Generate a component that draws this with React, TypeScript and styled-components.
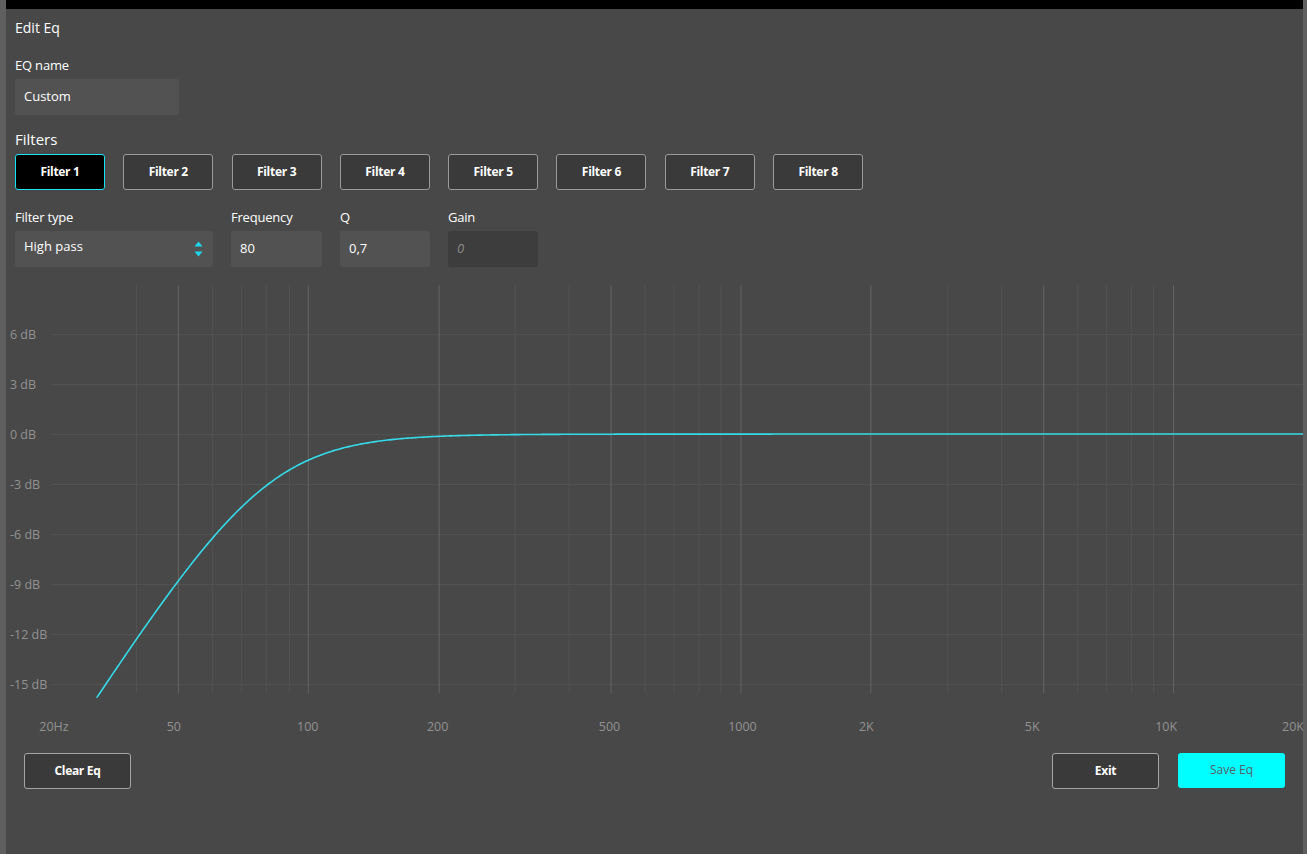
import React, { useMemo } from 'react';
import styled, { createGlobalStyle } from 'styled-components';

const GlobalStyle = createGlobalStyle`
  html, body, #root {
    height: 100%;
    margin: 0;
  }
  body {
    background: #484848;
    font-family: 'Open Sans', 'Liberation Sans', sans-serif;
    color: #fff;
    overflow: hidden;
  }
`;

const CHART_W = 1298;
const CHART_H = 460;
const PX_PER_DECADE = CHART_W / 3;
const ZERO_Y = 150;
const PX_PER_DB = 50 / 3;

const fx = (f: number) => PX_PER_DECADE * Math.log10(f / 20);
const dy = (db: number) => ZERO_Y - db * PX_PER_DB;

const majorLines = [50, 100, 200, 500, 1000, 2000, 5000, 10000];
const minorLines = [40, 60, 70, 80, 90, 300, 400, 600, 700, 800, 900, 3000, 4000, 6000, 7000, 8000, 9000];
const dbLines = [6, 3, 0, -3, -6, -9, -12, -15];
const freqLabels = [
  { text: '20Hz', x: 48 },
  { text: '50', x: 168 },
  { text: '100', x: 302 },
  { text: '200', x: 432 },
  { text: '500', x: 604 },
  { text: '1000', x: 737 },
  { text: '2K', x: 861 },
  { text: '5K', x: 1027 },
  { text: '10K', x: 1161 },
  { text: '20K', x: 1288 },
];

// 2nd order high pass magnitude in dB
const highPassDb = (f: number, f0: number, q: number) => {
  const r = f / f0;
  const r2 = r * r;
  const mag = r2 / Math.sqrt((1 - r2) * (1 - r2) + (r / q) * (r / q));
  return 20 * Math.log10(mag);
};

const EqChart: React.FC<{ freq: number; q: number }> = ({ freq, q }) => {
  const path = useMemo(() => {
    const pts: string[] = [];
    for (let x = 0; x <= CHART_W; x += 2) {
      const f = 20 * Math.pow(10, x / PX_PER_DECADE);
      pts.push(`${x},${dy(highPassDb(f, freq, q)).toFixed(2)}`);
    }
    return 'M' + pts.join(' L');
  }, [freq, q]);

  return (
    <ChartSvg width={CHART_W} height={CHART_H} viewBox={`0 0 ${CHART_W} ${CHART_H}`}>
      <defs>
        <clipPath id="plot">
          <rect x={0} y={0} width={CHART_W} height={414} />
        </clipPath>
      </defs>
      {dbLines.map(db => (
        <line key={db} x1={45} x2={CHART_W} y1={dy(db) + 0.5} y2={dy(db) + 0.5} stroke="#535353" strokeWidth={1} />
      ))}
      {minorLines.map(f => (
        <line key={f} x1={Math.round(fx(f)) + 0.5} x2={Math.round(fx(f)) + 0.5} y1={1} y2={409} stroke="#525252" />
      ))}
      {majorLines.map(f => (
        <line key={f} x1={Math.round(fx(f)) + 0.5} x2={Math.round(fx(f)) + 0.5} y1={1} y2={409} stroke="#646464" />
      ))}
      {dbLines.map(db => (
        <AxisText key={db} x={4} y={dy(db) + 5}>
          {db} dB
        </AxisText>
      ))}
      {freqLabels.map(l => (
        <AxisText key={l.text} x={l.x} y={447} textAnchor="middle">
          {l.text}
        </AxisText>
      ))}
      <path d={path} fill="none" stroke="#35dbe9" strokeWidth={1.6} clipPath="url(#plot)" />
    </ChartSvg>
  );
};

const filters = ['Filter 1', 'Filter 2', 'Filter 3', 'Filter 4', 'Filter 5', 'Filter 6', 'Filter 7', 'Filter 8'];

const App: React.FC = () => {
  return (
    <>
      <GlobalStyle />
      <Frame>
        <SideStrip width={6} />
        <Main>
          <TopBar />
          <Content>
            <Title>Edit Eq</Title>

            <Label>EQ name</Label>
            <Input width={164}>Custom</Input>

            <SectionTitle>Filters</SectionTitle>
            <FilterRow>
              {filters.map((f, i) => (
                <FilterButton key={f} isActive={i === 0}>
                  {f}
                </FilterButton>
              ))}
            </FilterRow>

            <ParamsRow>
              <Field width={198}>
                <Label>Filter type</Label>
                <Select>
                  <span>High pass</span>
                  <Arrows>
                    <svg width="9" height="16" viewBox="0 0 9 16">
                      <path d="M4.5 0.5 L8.5 5.5 L0.5 5.5 Z" fill="#1fd6f0" />
                      <path d="M4.5 15.5 L8.5 10.5 L0.5 10.5 Z" fill="#1fd6f0" />
                    </svg>
                  </Arrows>
                </Select>
              </Field>
              <Field width={91}>
                <Label>Frequency</Label>
                <Input>80</Input>
              </Field>
              <Field width={90}>
                <Label>Q</Label>
                <Input>0,7</Input>
              </Field>
              <Field width={90}>
                <Label>Gain</Label>
                <Input disabled>
                  <Placeholder>0</Placeholder>
                </Input>
              </Field>
            </ParamsRow>
          </Content>

          <ChartArea>
            <EqChart freq={80} q={0.7} />
          </ChartArea>

          <Footer>
            <ActionButton>Clear Eq</ActionButton>
            <FooterRight>
              <ActionButton>Exit</ActionButton>
              <PrimaryButton>Save Eq</PrimaryButton>
            </FooterRight>
          </Footer>
        </Main>
        <SideStrip width={4} />
      </Frame>
    </>
  );
};

const Frame = styled.div`
  display: flex;
  height: 100%;
  width: 100%;
  background: #484848;
`;

const SideStrip = styled.div<{ width: number }>`
  flex: 0 0 ${({ width }) => width}px;
  height: 100%;
  background: #5f5f5f;
`;

const Main = styled.div`
  flex: 1;
  display: flex;
  flex-direction: column;
  min-width: 0;
`;

const TopBar = styled.div`
  height: 9px;
  background: #000;
`;

const Content = styled.div`
  padding: 0 9px;
  display: flex;
  flex-direction: column;
  align-items: flex-start;
`;

const Title = styled.div`
  margin-top: 9px;
  font-size: 14px;
  line-height: 20px;
  font-weight: 500;
`;

const Label = styled.div`
  margin-top: 18px;
  margin-bottom: 5px;
  font-size: 13px;
  line-height: 18px;
  font-weight: 500;
  letter-spacing: -0.2px;
`;

const Input = styled.div<{ width?: number; disabled?: boolean }>`
  box-sizing: border-box;
  width: ${({ width }) => (width ? `${width}px` : '100%')};
  height: 36px;
  padding: 0 9px 2px;
  display: flex;
  align-items: center;
  border-radius: 3px;
  background: ${({ disabled }) => (disabled ? '#3d3d3d' : '#525252')};
  font-size: 13px;
  color: #fff;
`;

const Placeholder = styled.span`
  font-style: italic;
  color: #8a8a8a;
`;

const SectionTitle = styled.div`
  margin-top: 14px;
  margin-bottom: 5px;
  font-size: 15px;
  line-height: 20px;
  font-weight: 500;
`;

const FilterRow = styled.div`
  display: flex;
  gap: 18.3px;
`;

const FilterButton = styled.button<{ isActive: boolean }>`
  box-sizing: border-box;
  width: 90px;
  height: 36px;
  border-radius: 3px;
  border: 1px solid ${({ isActive }) => (isActive ? '#14e4f4' : '#9a9a9a')};
  background: ${({ isActive }) => (isActive ? '#000' : '#3a3a3a')};
  color: #fff;
  font-family: 'Open Sans', 'Liberation Sans', sans-serif;
  font-size: 12px;
  font-weight: 700;
  letter-spacing: -0.3px;
  padding: 0 0 2px;
`;

const ParamsRow = styled.div`
  display: flex;
  gap: 18px;
`;

const Field = styled.div<{ width: number }>`
  width: ${({ width }) => width}px;
  display: flex;
  flex-direction: column;
`;

const Select = styled.div`
  box-sizing: border-box;
  width: 100%;
  height: 36px;
  padding: 0 10px 7px 9px;
  display: flex;
  align-items: center;
  justify-content: space-between;
  border-radius: 3px;
  background: #525252;
  font-size: 13px;
`;

const Arrows = styled.span`
  display: flex;
  margin-top: 7px;
`;

const ChartArea = styled.div`
  margin-top: 17px;
  display: flex;
`;

const ChartSvg = styled.svg`
  display: block;
`;

const AxisText = styled.text`
  font-family: 'Open Sans', 'Liberation Sans', sans-serif;
  font-size: 12.5px;
  fill: #929292;
`;

const Footer = styled.div`
  margin-top: 9px;
  padding: 0 18px;
  display: flex;
  justify-content: space-between;
  align-items: flex-start;
`;

const FooterRight = styled.div`
  display: flex;
  gap: 19px;
`;

const ActionButton = styled.button`
  box-sizing: border-box;
  width: 107px;
  height: 36px;
  border-radius: 3px;
  border: 1px solid #a5a5a5;
  background: #3a3a3a;
  color: #fff;
  font-family: 'Open Sans', 'Liberation Sans', sans-serif;
  font-size: 12px;
  font-weight: 700;
  letter-spacing: -0.3px;
  padding: 0 0 1px;
`;

const PrimaryButton = styled.button`
  box-sizing: border-box;
  width: 107px;
  height: 35px;
  border-radius: 3px;
  border: none;
  background: #00ffff;
  color: #56606a;
  font-family: 'Open Sans', 'Liberation Sans', sans-serif;
  font-size: 12px;
  padding: 0 0 3px;
`;

export default App;
